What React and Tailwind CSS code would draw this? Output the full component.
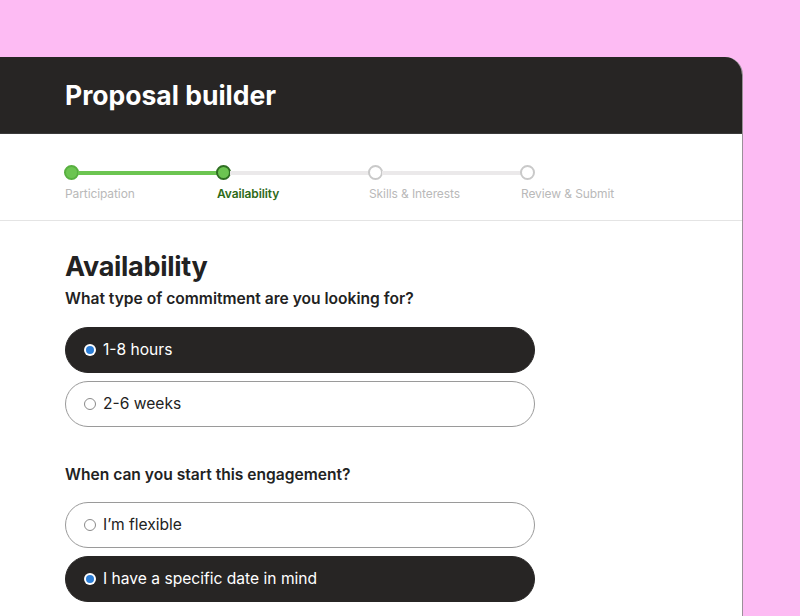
import React from "react";

const steps = [
  { label: "Participation", state: "done" },
  { label: "Availability", state: "current" },
  { label: "Skills & Interests", state: "todo" },
  { label: "Review & Submit", state: "todo" },
];

function Step({ step, last, nextActive }) {
  const circle =
    step.state === "todo"
      ? "bg-white border-2 border-[#c9c9c9]"
      : step.state === "current"
      ? "bg-[#6cc551] border-2 border-[#2f6f22]"
      : "bg-[#6cc551] border-2 border-[#58b040]";
  const label =
    step.state === "current"
      ? "text-[#2d6a18] font-semibold"
      : "text-[#b9b9b9]";
  return (
    <div className="w-[152px] flex flex-col">
      <div className="flex items-center">
        <div className={`w-[15px] h-[15px] rounded-full shrink-0 ${circle}`}></div>
        {!last && (
          <div
            className={
              nextActive
                ? "flex-1 h-[4px] bg-[#6cc551] -mx-[1px]"
                : "flex-1 h-[4px] bg-[#ebe9ea] -mx-[1px]"
            }
          ></div>
        )}
      </div>
      <div className={`mt-[6px] pl-[1px] text-[12px] leading-4 tracking-[-0.1px] ${label}`}>{step.label}</div>
    </div>
  );
}

function Option({ text, selected }) {
  return (
    <div
      className={
        selected
          ? "w-[470px] h-[46px] rounded-full bg-[#272524] border border-[#272524] flex items-center pl-[18px] gap-[7px] text-white"
          : "w-[470px] h-[46px] rounded-full bg-white border border-[#9a9a9a] flex items-center pl-[18px] gap-[7px] text-[#222]"
      }
    >
      {selected ? (
        <div className="w-[12px] h-[12px] rounded-full bg-white flex items-center justify-center">
          <div className="w-[8px] h-[8px] rounded-full bg-[#2c7ed6]"></div>
        </div>
      ) : (
        <div className="w-[12px] h-[12px] rounded-full bg-white border border-[#8a8a8a]"></div>
      )}
      <span className="text-[15.6px] leading-5">{text}</span>
    </div>
  );
}

export default function App() {
  return (
    <div
      className="w-[800px] h-[616px] overflow-hidden bg-[#fdbbf3] pt-[57px]"
      style={{ fontFamily: "Inter, 'Noto Sans', sans-serif" }}
    >
      <div className="w-[743px] h-[600px] bg-white rounded-tr-[18px] overflow-hidden border-r border-[#9b8f99]">
        <div className="h-[77px] bg-[#272524] flex items-center pl-[65px] border-b border-[#3a3a3a]">
          <h1 className="text-white text-[26.5px] font-bold mt-[2px]">Proposal builder</h1>
        </div>

        <div className="pl-[64px] pt-[31px] pb-[18px] border-b border-[#e4e4e4] flex">
          {steps.map((s, i) => (
            <Step
              key={s.label}
              step={s}
              last={i === steps.length - 1}
              nextActive={i === 0}
            />
          ))}
        </div>

        <div className="pl-[65px] pt-[29px]">
          <h2 className="text-[27px] leading-[34px] font-bold text-[#222] tracking-[-0.3px]">Availability</h2>
          <p className="mt-[5px] text-[15.6px] leading-5 font-semibold text-[#222]">
            What type of commitment are you looking for?
          </p>
          <div className="mt-[18px] flex flex-col gap-[8px]">
            <Option text="1-8 hours" selected />
            <Option text="2-6 weeks" />
          </div>

          <p className="mt-[38px] text-[15.6px] leading-5 font-semibold text-[#222]">
            When can you start this engagement?
          </p>
          <div className="mt-[17px] flex flex-col gap-[8px]">
            <Option text="I’m flexible" />
            <Option text="I have a specific date in mind" selected />
          </div>
        </div>
      </div>
    </div>
  );
}
